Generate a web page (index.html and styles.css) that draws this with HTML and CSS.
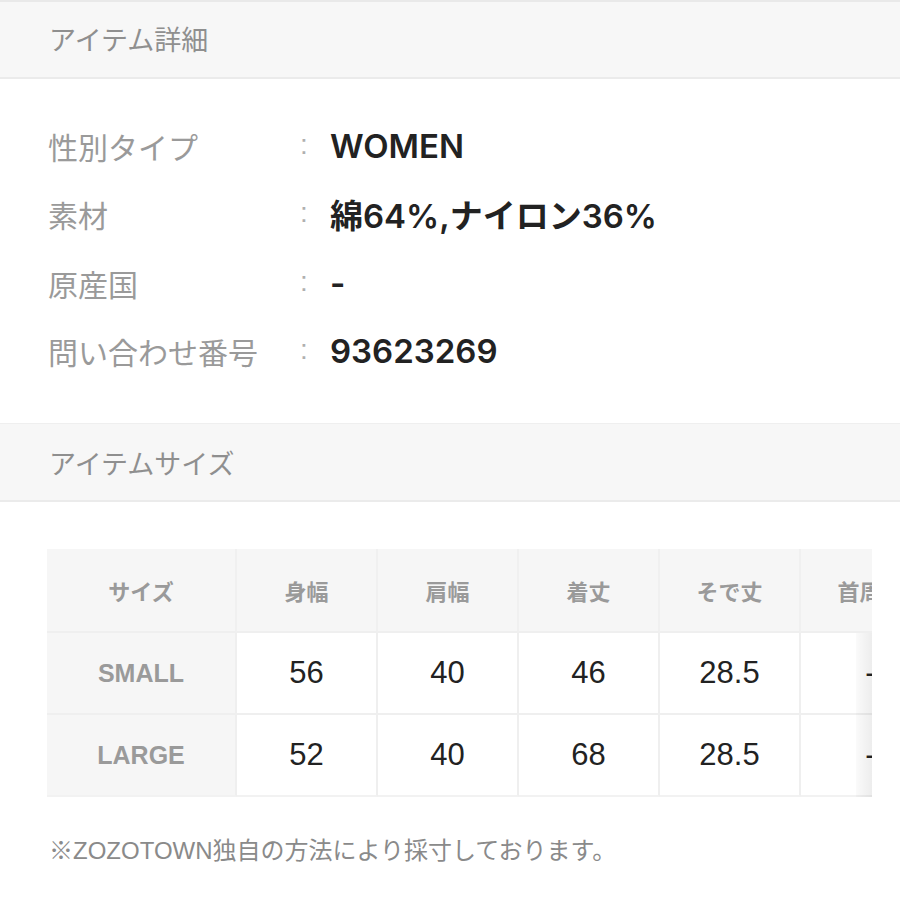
FILE: index.html
```html
<!DOCTYPE html>
<html lang="ja">
<head>
<meta charset="utf-8">
<link rel="stylesheet" href="styles.css">
</head>
<body>
<section class="sec-head first"><h2>アイテム詳細</h2></section>
<dl class="details">
  <div class="row"><dt>性別タイプ</dt><span class="colon">:</span><dd>WOMEN</dd></div>
  <div class="row"><dt>素材</dt><span class="colon">:</span><dd>綿64%,ナイロン36%</dd></div>
  <div class="row"><dt>原産国</dt><span class="colon">:</span><dd>-</dd></div>
  <div class="row"><dt>問い合わせ番号</dt><span class="colon">:</span><dd>93623269</dd></div>
</dl>
<section class="sec-head"><h2>アイテムサイズ</h2></section>
<div class="size-wrap">
  <div class="scroller">
    <table class="size-table">
      <thead>
        <tr><th class="c1">サイズ</th><th>身幅</th><th>肩幅</th><th>着丈</th><th>そで丈</th><th>首周り</th></tr>
      </thead>
      <tbody>
        <tr><th class="c1">SMALL</th><td>56</td><td>40</td><td>46</td><td>28.5</td><td>-</td></tr>
        <tr><th class="c1">LARGE</th><td>52</td><td>40</td><td>68</td><td>28.5</td><td>-</td></tr>
      </tbody>
    </table>
    <div class="shade"></div>
  </div>
</div>
<p class="note">※ZOZOTOWN独自の方法により採寸しております。</p>
</body>
</html>
```
FILE: styles.css
```css
* { box-sizing: border-box; }
html, body { margin: 0; padding: 0; background: #fff; }
body {
  font-family: "Liberation Sans", "Noto Sans CJK JP", sans-serif;
  color: #222;
  width: 900px;
  height: 900px;
  overflow: hidden;
}
.sec-head {
  background: #f7f7f7;
  border-top: 1px solid #efefef;
  border-bottom: 2px solid #ebebeb;
  height: 79px;
  display: flex;
  align-items: center;
  padding-left: 49px;
}
.sec-head.first {
  height: 79px;
  padding-bottom: 3px;
  border-top: 2px solid #e9e9e9;
}
.sec-head h2 {
  margin: 0;
  font-family: "Noto Sans CJK JP", sans-serif;
  font-weight: 400;
  font-size: 27px;
  color: #8f8f8f;
  letter-spacing: 0;
}
.details {
  margin: 0;
  padding: 33px 0 38px 48px;
}
.row {
  display: grid;
  grid-template-columns: 250px 32px 1fr;
  align-items: center;
  height: 68.3px;
}
.row dt {
  font-family: "Noto Sans CJK JP", sans-serif;
  font-size: 30px;
  color: #9a9a9a;
  font-weight: 400;
}
.colon {
  font-size: 28px;
  color: #b0b0b0;
  padding-left: 2px;
  position: relative;
  top: -1px;
}
.row dd {
  margin: 0;
  font-family: Inter, "Liberation Sans", "Noto Sans CJK JP", sans-serif;
  font-size: 33px;
  font-weight: 600;
  color: #222;
}
.size-wrap {
  padding: 47px 0 0 47px;
}
.scroller {
  position: relative;
  width: 825px;
  overflow: hidden;
}
.size-table {
  border-collapse: separate;
  border-spacing: 0;
  table-layout: fixed;
  width: 895px;
}
.size-table th,
.size-table td {
  width: 141px;
  text-align: center;
  border-right: 2px solid #efefef;
  border-bottom: 2px solid #efefef;
  padding: 0;
}
.size-table .c1 { width: 190px; }
.size-table thead th {
  height: 84px;
  background: #f6f6f6;
  font-family: "Noto Sans CJK JP", sans-serif;
  font-size: 22px;
  font-weight: 700;
  color: #9a9a9a;
  border-right-color: #f0f0f0;
}
.size-table tbody tr { height: 82px; }
.size-table tbody th {
  background: #f6f6f6;
  font-size: 25px;
  font-weight: 700;
  color: #9a9a9a;
}
.size-table td {
  background: #fff;
  font-size: 31px;
  color: #222;
}
.size-table tbody tr:last-child th,
.size-table tbody tr:last-child td { border-bottom-color: #f2f2f2; }
.shade {
  position: absolute;
  top: 84px;
  right: 0;
  bottom: 0;
  width: 16px;
  background: linear-gradient(to right, rgba(0,0,0,0.02), rgba(0,0,0,0.07));
}
.note {
  margin: 34px 0 0 49px;
  font-family: "Liberation Sans", "Noto Sans CJK JP", sans-serif;
  font-size: 24px;
  color: #8a8a8a;
}
```
